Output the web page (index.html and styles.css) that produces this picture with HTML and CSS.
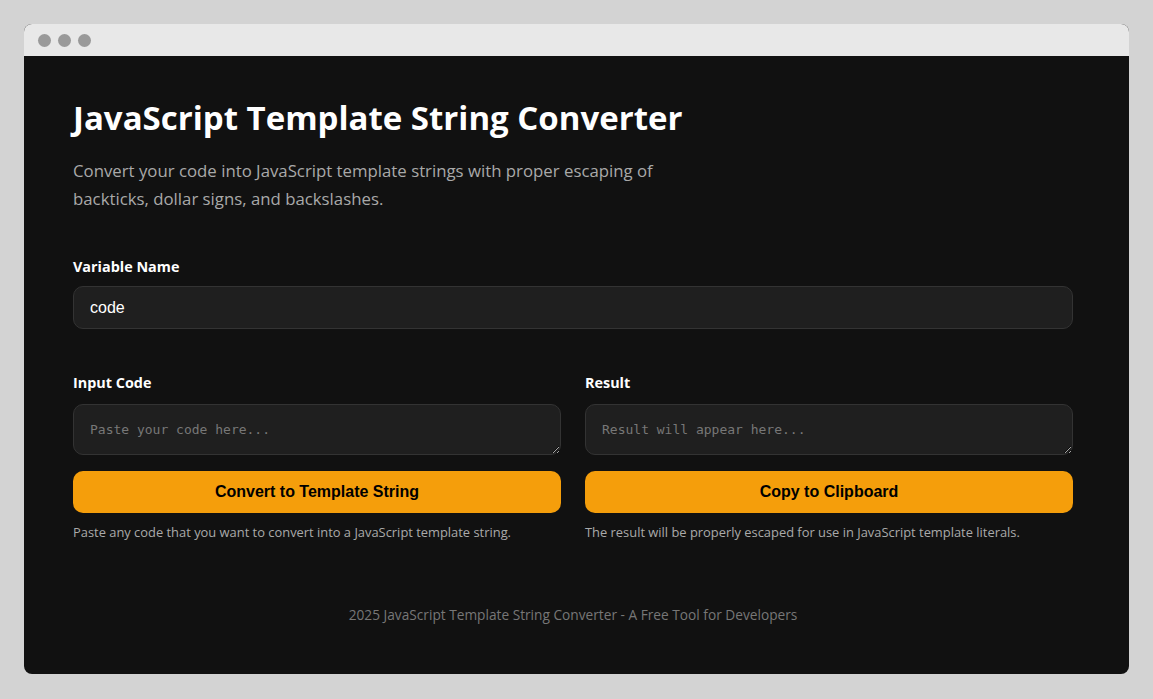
FILE: index.html
```html
<!DOCTYPE html>
<html lang="en">
<head>
<meta charset="utf-8">
<title>JavaScript Template String Converter</title>
<link rel="stylesheet" href="styles.css">
</head>
<body>
<div class="window">
  <div class="titlebar">
    <span class="dot"></span><span class="dot"></span><span class="dot"></span>
  </div>
  <div class="page">
    <div class="container">
      <h1 class="title">JavaScript Template String Converter</h1>
      <p class="lead">Convert your code into JavaScript template strings with proper escaping of backticks, dollar signs, and backslashes.</p>

      <div class="field">
        <label class="label">Variable Name</label>
        <input class="text-input" type="text" value="code">
      </div>

      <div class="columns">
        <div class="col">
          <label class="label col-label">Input Code</label>
          <textarea class="code-area" placeholder="Paste your code here..."></textarea>
          <button class="btn">Convert to Template String</button>
          <p class="help">Paste any code that you want to convert into a JavaScript template string.</p>
        </div>
        <div class="col">
          <label class="label col-label">Result</label>
          <textarea class="code-area" placeholder="Result will appear here..." readonly></textarea>
          <button class="btn">Copy to Clipboard</button>
          <p class="help">The result will be properly escaped for use in JavaScript template literals.</p>
        </div>
      </div>

      <footer class="footer">2025 JavaScript Template String Converter - A Free Tool for Developers</footer>
    </div>
  </div>
</div>
</body>
</html>
```

FILE: styles.css
```css
* { box-sizing: border-box; }
html, body { margin: 0; padding: 0; }
body {
  background: #d3d3d3;
  padding: 24px;
  font-family: "Open Sans", "Noto Sans", sans-serif;
}
.window {
  width: 1105px;
  height: 650px;
  border-radius: 8px;
  overflow: hidden;
  background: #111111;
  display: flex;
  flex-direction: column;
}
.titlebar {
  height: 32px;
  background: #e8e8e8;
  display: flex;
  align-items: center;
  padding-left: 14px;
  gap: 7px;
  flex: none;
}
.dot {
  width: 13px;
  height: 13px;
  border-radius: 50%;
  background: #999999;
}
.page {
  flex: 1;
  padding: 0 56px 0 49px;
}
.container {
  width: 1000px;
}
.title {
  margin: 40px 0 0;
  color: #ffffff;
  font-size: 33px;
  font-weight: 700;
  line-height: 44px;
  letter-spacing: 0;
}
.lead {
  margin: 17px 0 0;
  width: 610px;
  color: #a9a9a9;
  font-size: 16.8px;
  line-height: 28px;
}
.field { margin-top: 44px; }
.label {
  display: block;
  color: #ffffff;
  font-size: 14.4px;
  font-weight: 700;
  line-height: 20px;
  margin-bottom: 9px;
}
.col-label { margin-bottom: 11px; }
.text-input {
  display: block;
  width: 100%;
  height: 43px;
  background: #1f1f1f;
  border: 1px solid #333333;
  border-radius: 10px;
  color: #ffffff;
  font-family: "Liberation Sans", Arial, sans-serif;
  font-size: 16px;
  padding: 0 16px;
  outline: none;
}
.columns {
  margin-top: 44px;
  display: grid;
  grid-template-columns: 1fr 1fr;
  gap: 24px;
}
.col { display: flex; flex-direction: column; }
.code-area {
  display: block;
  width: 100%;
  height: 51px;
  background: #1f1f1f;
  border: 1px solid #333333;
  border-radius: 10px;
  color: #dddddd;
  font-family: "DejaVu Sans Mono", "Liberation Mono", monospace;
  font-size: 13px;
  line-height: 18px;
  padding: 16px 16px 14px;
  resize: vertical;
  outline: none;
}
.code-area::placeholder { color: #777777; }
.btn {
  margin-top: 16px;
  height: 42px;
  width: 100%;
  border: none;
  border-radius: 10px;
  background: #f59e0b;
  color: #000000;
  font-family: "Liberation Sans", Arial, sans-serif;
  font-size: 16px;
  font-weight: 700;
  cursor: pointer;
}
.help {
  margin: 10px 0 0;
  color: #aaaaaa;
  font-size: 12.9px;
  line-height: 18px;
}
.footer {
  margin-top: 64px;
  text-align: center;
  color: #777777;
  font-size: 13.7px;
  line-height: 20px;
}
```
